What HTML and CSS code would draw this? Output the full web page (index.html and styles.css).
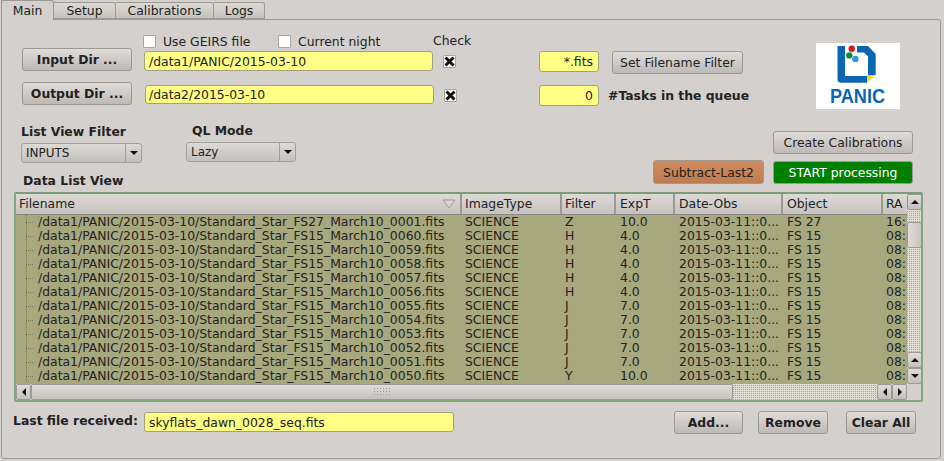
FILE: index.html
```html
<!DOCTYPE html>
<html lang="en">
<head>
  <meta charset="UTF-8">
  <title>PANIC Quick Look</title>
  <link rel="stylesheet" href="styles.css">
</head>
<body>

<div class="tabs">
  <div class="tab tab-active">Main</div>
  <div class="tab tab-setup">Setup</div>
  <div class="tab tab-calib">Calibrations</div>
  <div class="tab tab-logs">Logs</div>
</div>

<div class="pane">
  <div class="top">
    <div class="dirs">
      <div class="cell-empty"></div>
      <div class="options">
        <label class="option opt-geirs"><span class="check"></span>Use GEIRS file</label>
        <label class="option"><span class="check"></span>Current night</label>
      </div>
      <div class="check-title">Check</div>
      <div></div>
      <div></div>

      <button class="btn btn-bold btn-dir">Input Dir ...</button>
      <div class="edit edit-path">/data1/PANIC/2015-03-10</div>
      <span class="check check-on"><svg width="11" height="11" viewBox="0 0 11 11"><path d="M1.5 1.5L9.5 9.5M9.5 1.5L1.5 9.5" stroke="#111" stroke-width="3"/></svg></span>
      <div class="edit edit-small">*.fits</div>
      <div><button class="btn btn-filter">Set Filename Filter</button></div>

      <button class="btn btn-bold btn-dir">Output Dir ...</button>
      <div class="edit edit-path edit-out">/data2/2015-03-10</div>
      <span class="check check-on check-out"><svg width="11" height="11" viewBox="0 0 11 11"><path d="M1.5 1.5L9.5 9.5M9.5 1.5L1.5 9.5" stroke="#111" stroke-width="3"/></svg></span>
      <div class="edit edit-small">0</div>
      <div class="tasks">#Tasks in the queue</div>
    </div>

    <svg class="logo" width="84" height="66" viewBox="0 0 84 66">
      <rect width="84" height="66" fill="#fff"/>
      <path d="M21.5 3H29V33H51V39.8H25Q21.5 39.8 21.5 36ZM41 3H52L59.7 11V32H52V13.5L48 9.5H41Z" fill="#0a66b2"/>
      <path d="M51 32H59.5L51 40Z" fill="#f7d924"/>
      <circle cx="35.7" cy="5.8" r="3.2" fill="#d8141f"/>
      <circle cx="33.3" cy="12.4" r="3.2" fill="#128a3c"/>
      <circle cx="39.4" cy="16" r="3.2" fill="#2a9ad8"/>
      <text x="14" y="60" class="logo-text" textLength="55" lengthAdjust="spacingAndGlyphs">PANIC</text>
    </svg>
  </div>

  <div class="lower">
    <div class="lower-left">
      <div class="combos">
        <div class="combo-group combo-group-filter">
          <div class="title">List View Filter</div>
          <div class="combo combo-filter">INPUTS<span class="combo-arrow"><i class="tri tri-down"></i></span></div>
        </div>
        <div class="combo-group">
          <div class="title title-ql">QL Mode</div>
          <div class="combo combo-ql">Lazy<span class="combo-arrow"><i class="tri tri-down"></i></span></div>
        </div>
      </div>
      <div class="title title-list">Data List View</div>
    </div>
    <div class="lower-right">
      <button class="btn btn-calib">Create Calibrations</button>
      <div class="run-row">
        <button class="btn btn-subtract">Subtract-Last2</button>
        <button class="btn btn-start">START processing</button>
      </div>
    </div>
  </div>

  <div class="tree">
    <div class="tree-main">
      <div class="row head">
        <div class="c c1 h1">Filename<svg class="sort" width="14" height="10" viewBox="0 0 14 10"><path d="M1 1H13L7 9Z" fill="#dad7d3" stroke="#9d9a96"/></svg></div>
        <div class="c c2">ImageType</div>
        <div class="c c3">Filter</div>
        <div class="c c4">ExpT</div>
        <div class="c c5">Date-Obs</div>
        <div class="c c6">Object</div>
        <div class="c c7">RA</div>
      </div>
      <div class="row"><div class="c c1"><span class="branch"></span>/data1/PANIC/2015-03-10/Standard_Star_FS27_March10_0001.fits</div><div class="c c2">SCIENCE</div><div class="c c3">Z</div><div class="c c4">10.0</div><div class="c c5">2015-03-11::0...</div><div class="c c6">FS 27</div><div class="c c7">16:</div></div>
      <div class="row"><div class="c c1"><span class="branch"></span>/data1/PANIC/2015-03-10/Standard_Star_FS15_March10_0060.fits</div><div class="c c2">SCIENCE</div><div class="c c3">H</div><div class="c c4">4.0</div><div class="c c5">2015-03-11::0...</div><div class="c c6">FS 15</div><div class="c c7">08:</div></div>
      <div class="row"><div class="c c1"><span class="branch"></span>/data1/PANIC/2015-03-10/Standard_Star_FS15_March10_0059.fits</div><div class="c c2">SCIENCE</div><div class="c c3">H</div><div class="c c4">4.0</div><div class="c c5">2015-03-11::0...</div><div class="c c6">FS 15</div><div class="c c7">08:</div></div>
      <div class="row"><div class="c c1"><span class="branch"></span>/data1/PANIC/2015-03-10/Standard_Star_FS15_March10_0058.fits</div><div class="c c2">SCIENCE</div><div class="c c3">H</div><div class="c c4">4.0</div><div class="c c5">2015-03-11::0...</div><div class="c c6">FS 15</div><div class="c c7">08:</div></div>
      <div class="row"><div class="c c1"><span class="branch"></span>/data1/PANIC/2015-03-10/Standard_Star_FS15_March10_0057.fits</div><div class="c c2">SCIENCE</div><div class="c c3">H</div><div class="c c4">4.0</div><div class="c c5">2015-03-11::0...</div><div class="c c6">FS 15</div><div class="c c7">08:</div></div>
      <div class="row"><div class="c c1"><span class="branch"></span>/data1/PANIC/2015-03-10/Standard_Star_FS15_March10_0056.fits</div><div class="c c2">SCIENCE</div><div class="c c3">H</div><div class="c c4">4.0</div><div class="c c5">2015-03-11::0...</div><div class="c c6">FS 15</div><div class="c c7">08:</div></div>
      <div class="row"><div class="c c1"><span class="branch"></span>/data1/PANIC/2015-03-10/Standard_Star_FS15_March10_0055.fits</div><div class="c c2">SCIENCE</div><div class="c c3">J</div><div class="c c4">7.0</div><div class="c c5">2015-03-11::0...</div><div class="c c6">FS 15</div><div class="c c7">08:</div></div>
      <div class="row"><div class="c c1"><span class="branch"></span>/data1/PANIC/2015-03-10/Standard_Star_FS15_March10_0054.fits</div><div class="c c2">SCIENCE</div><div class="c c3">J</div><div class="c c4">7.0</div><div class="c c5">2015-03-11::0...</div><div class="c c6">FS 15</div><div class="c c7">08:</div></div>
      <div class="row"><div class="c c1"><span class="branch"></span>/data1/PANIC/2015-03-10/Standard_Star_FS15_March10_0053.fits</div><div class="c c2">SCIENCE</div><div class="c c3">J</div><div class="c c4">7.0</div><div class="c c5">2015-03-11::0...</div><div class="c c6">FS 15</div><div class="c c7">08:</div></div>
      <div class="row"><div class="c c1"><span class="branch"></span>/data1/PANIC/2015-03-10/Standard_Star_FS15_March10_0052.fits</div><div class="c c2">SCIENCE</div><div class="c c3">J</div><div class="c c4">7.0</div><div class="c c5">2015-03-11::0...</div><div class="c c6">FS 15</div><div class="c c7">08:</div></div>
      <div class="row"><div class="c c1"><span class="branch"></span>/data1/PANIC/2015-03-10/Standard_Star_FS15_March10_0051.fits</div><div class="c c2">SCIENCE</div><div class="c c3">J</div><div class="c c4">7.0</div><div class="c c5">2015-03-11::0...</div><div class="c c6">FS 15</div><div class="c c7">08:</div></div>
      <div class="row"><div class="c c1"><span class="branch"></span>/data1/PANIC/2015-03-10/Standard_Star_FS15_March10_0050.fits</div><div class="c c2">SCIENCE</div><div class="c c3">Y</div><div class="c c4">10.0</div><div class="c c5">2015-03-11::0...</div><div class="c c6">FS 15</div><div class="c c7">08:</div></div>
    </div>

    <div class="vscroll">
      <span class="sb-btn sb-v"><i class="tri tri-up"></i></span>
      <div class="sb-track sb-track-top"></div>
      <span class="sb-thumb-v"></span>
      <div class="sb-track sb-fill"></div>
      <span class="sb-btn sb-v"><i class="tri tri-up"></i></span>
      <span class="sb-btn sb-v"><i class="tri tri-down"></i></span>
    </div>

    <div class="hscroll">
      <span class="sb-btn sb-h"><i class="tri tri-left"></i></span>
      <span class="sb-thumb-h"><span class="grip"></span></span>
      <div class="sb-track sb-fill"></div>
      <span class="sb-btn sb-h"><i class="tri tri-left"></i></span>
      <span class="sb-btn sb-h"><i class="tri tri-right"></i></span>
    </div>
    <div class="corner"></div>
  </div>

  <div class="bottom">
    <div class="title title-last">Last file received:</div>
    <div class="edit edit-last">skyflats_dawn_0028_seq.fits</div>
    <button class="btn btn-bold btn-add">Add...</button>
    <button class="btn btn-bold btn-remove">Remove</button>
    <button class="btn btn-bold btn-clear">Clear All</button>
  </div>
</div>

</body>
</html>
```

FILE: styles.css
```css
* {
  box-sizing: border-box;
}
html, body {
  height: 100%;
}
body {
  margin: 0;
  background-color: #d4d0cd;
  color: #222;
  font-family: "DejaVu Sans", sans-serif;
  font-size: 12.4px;
  overflow: hidden;
}

/* tabs */
.tabs {
  display: flex;
  height: 20px;
  padding-left: 1px;
  align-items: flex-start;
}
.tab {
  height: 17px;
  margin-top: 2px;
  border: 1px solid #9c9995;
  border-left: none;
  border-radius: 0 3px 0 0;
  background: linear-gradient(#dcd9d6, #c6c3bf);
  text-align: center;
  line-height: 16px;
}
.tab-active {
  position: relative;
  z-index: 1;
  width: 53px;
  height: 20px;
  margin-top: 0;
  border-left: 1px solid #9c9995;
  border-bottom: none;
  background: #d4d0cd;
  line-height: 19px;
}
.tab-setup { width: 62px; }
.tab-calib { width: 98px; }
.tab-logs { width: 51px; }

/* main pane */
.pane {
  width: 940px;
  height: 440px;
  margin: -1px 0 0 1px;
  padding: 14px 0 0 12px;
  border: 1px solid #9c9995;
  border-radius: 0 3px 3px 3px;
}
.top {
  display: flex;
  height: 75px;
}
.dirs {
  display: grid;
  grid-template-columns: 122px 289px 106px 73px 204px;
  grid-template-rows: 14px 34px 24px;
  margin-left: 8px;
}
.options {
  display: flex;
  margin-left: -1px;
}
.option {
  display: flex;
  align-items: center;
  gap: 7px;
  height: 14px;
}
.opt-geirs {
  width: 135px;
}
.check-title {
  line-height: 14px;
}
.check {
  display: flex;
  align-items: center;
  justify-content: center;
  flex: none;
  width: 13px;
  height: 13px;
  border: 1px solid #a9a6a2;
  border-radius: 1px;
  background: #fff;
}
.check-on {
  margin: 7px 0 0 10px;
}
.check-out {
  margin: 7px 0 0 11px;
}
.logo {
  flex: none;
  margin: 9px 0 0 0;
}
.logo-text {
  font-family: "Liberation Sans", sans-serif;
  font-weight: bold;
  font-size: 20px;
  fill: #0a66b2;
}

/* widgets */
.btn {
  display: block;
  height: 23px;
  padding: 0;
  border: 1px solid #9c9995;
  border-radius: 3px;
  background: linear-gradient(#dfdcd9, #bdb9b6);
  color: #222;
  font-family: "DejaVu Sans", sans-serif;
  font-size: 12.4px;
}
.btn-bold {
  font-weight: bold;
}
.btn-dir {
  width: 110px;
}
.btn-filter {
  width: 131px;
  margin-top: 3px;
}
.edit {
  height: 20px;
  padding: 0 4px;
  border: 1px solid #a3a07c;
  border-radius: 3px;
  background: #ffff85;
  line-height: 19px;
  white-space: nowrap;
}
.edit-path {
  width: 289px;
  margin-top: 3px;
}
.edit-out {
  height: 19px;
  margin-left: 1px;
  padding-left: 3px;
  line-height: 17px;
}
.edit-small {
  width: 60px;
  height: 21px;
  margin-top: 3px;
  text-align: right;
  padding-right: 5px;
}
.tasks {
  margin: 3px 0 0 -4px;
  font-weight: bold;
  line-height: 21px;
  white-space: nowrap;
}
.title {
  font-weight: bold;
  line-height: 14px;
  white-space: nowrap;
}

/* filters and run buttons */
.lower {
  display: flex;
  height: 83px;
  width: 899px;
}
.lower-left {
  padding: 16px 0 0 7px;
}
.combos {
  display: flex;
}
.combo-group-filter {
  width: 165px;
}
.title-ql {
  margin: -1px 0 1px 6px;
}
.combo {
  display: flex;
  align-items: center;
  justify-content: space-between;
  height: 20px;
  margin-top: 4px;
  padding-left: 4px;
  border: 1px solid #a3a09c;
  border-radius: 3px;
  background: linear-gradient(#dcd9d6, #c4c1bd);
  font-size: 12px;
}
.combo-filter {
  width: 121px;
}
.combo-ql {
  width: 110px;
}
.combo-arrow {
  display: flex;
  align-items: center;
  justify-content: center;
  width: 16px;
  height: 100%;
  border-left: 1px solid #a3a09c;
}
.title-list {
  margin: 11px 0 0 2px;
}
.lower-right {
  display: flex;
  flex-direction: column;
  align-items: flex-end;
  margin-left: auto;
  padding-top: 22px;
}
.btn-calib {
  width: 140px;
}
.run-row {
  display: flex;
  align-items: flex-end;
  gap: 9px;
  margin-top: 6px;
}
.btn-subtract {
  width: 111px;
  height: 24px;
  background: linear-gradient(#d08b5e, #bd7d50);
}
.btn-start {
  width: 140px;
  background: #007f00;
  color: #fff;
}

/* triangles for combo and scrollbars */
.tri {
  display: block;
  width: 0;
  height: 0;
  border: 4px solid transparent;
}
.tri-down {
  border-top-color: #111;
  border-bottom: none;
}
.tri-up {
  border-bottom-color: #111;
  border-top: none;
}
.tri-left {
  border-right-color: #111;
  border-left: none;
}
.tri-right {
  border-left-color: #111;
  border-right: none;
}

/* file list */
.tree {
  display: grid;
  grid-template-columns: 891px 14px;
  grid-template-rows: 190px 16px;
  width: 909px;
  height: 210px;
  border: 2px solid #7fa77c;
  border-top-color: #7a9d77;
  border-radius: 2px;
}
.tree-main {
  background: #a8a87e;
  overflow: hidden;
}
.row {
  display: flex;
  height: 14px;
  line-height: 14px;
}
.head {
  height: 21px;
  line-height: 20px;
  background: linear-gradient(#dcd9d6, #c6c3bf);
  border-bottom: 1px solid #8c8985;
}
.c {
  flex: none;
  padding-left: 3px;
  overflow: hidden;
  white-space: nowrap;
}
.head .c {
  border-right: 2px solid #9c9995;
  padding-left: 3px;
}
.head .c7 {
  border-right: none;
}
.c1 {
  display: flex;
  width: 446px;
  padding-left: 10px;
}
.h1 {
  align-items: center;
  justify-content: space-between;
  padding-left: 3px !important;
  padding-right: 4px;
}
.sort {
  display: block;
}
.c2 { width: 100px; }
.c3 { width: 54px; }
.c4 { width: 59px; padding-left: 4px !important; }
.c5 { width: 108px; padding-left: 4px !important; }
.c6 { width: 100px; padding-left: 4px !important; }
.c7 { width: 24px; }
.branch {
  flex: none;
  width: 8px;
  height: 14px;
  margin-right: 4px;
  background:
    linear-gradient(#77775e 50%, transparent 50%) 0 0 / 1px 2px repeat-y,
    linear-gradient(to right, #77775e 50%, transparent 50%) 0 7px / 2px 1px repeat-x;
}

/* scrollbars */
.vscroll {
  display: flex;
  flex-direction: column;
  grid-row: 1;
  grid-column: 2;
  overflow: hidden;
}
.hscroll {
  display: flex;
  grid-row: 2;
  grid-column: 1;
}
.corner {
  background: #d4d0cd;
}
.sb-btn {
  display: flex;
  align-items: center;
  justify-content: center;
  flex: none;
  border: 1px solid #9c9995;
  border-radius: 2px;
  background: linear-gradient(#dfdcd9, #c4c1bd);
}
.sb-v {
  width: 15px;
  height: 16px;
}
.sb-h {
  width: 15px;
  height: 16px;
}
.sb-track {
  background:
    linear-gradient(45deg, #a9a98a 25%, transparent 25%, transparent 75%, #a9a98a 75%) 0 0 / 2px 2px,
    #dedcd2;
}
.sb-track-top {
  flex: none;
  height: 12px;
}
.sb-fill {
  flex: 1;
}
.sb-thumb-v {
  flex: none;
  width: 15px;
  height: 26px;
  border: 1px solid #9c9995;
  border-radius: 2px;
  background: linear-gradient(to right, #dfdcd9, #c8c5c1);
}
.sb-thumb-h {
  display: flex;
  align-items: center;
  justify-content: center;
  flex: none;
  width: 702px;
  height: 16px;
  border: 1px solid #9c9995;
  border-radius: 2px;
  background: linear-gradient(#dfdcd9, #c4c1bd);
}
.grip {
  width: 18px;
  height: 10px;
  background: radial-gradient(#9c9995 40%, transparent 45%) 0 0 / 3px 3px;
}

/* bottom row */
.bottom {
  display: flex;
  align-items: flex-start;
  width: 902px;
  margin-top: 9px;
}
.title-last {
  width: 131px;
  margin-left: -1px;
  padding-top: 3px;
}
.edit-last {
  width: 310px;
  margin-top: 1px;
}
.btn-add {
  width: 69px;
  margin-left: auto;
}
.btn-remove {
  width: 70px;
  margin-left: 15px;
}
.btn-clear {
  width: 70px;
  margin-left: 18px;
}
```
